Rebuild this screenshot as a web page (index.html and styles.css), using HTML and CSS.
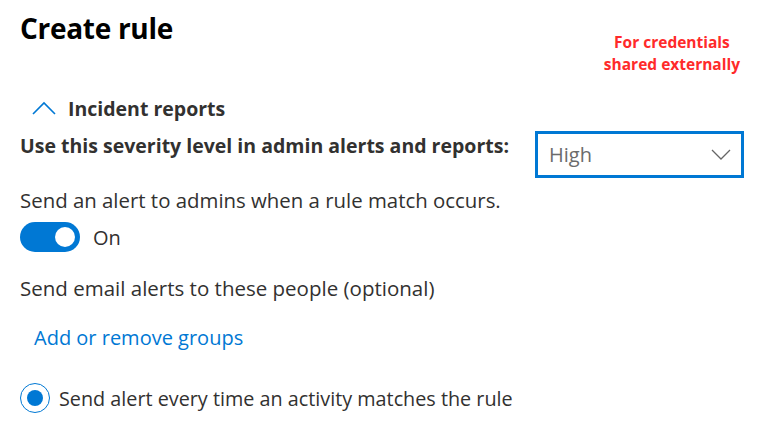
FILE: index.html
```html
<!DOCTYPE html>
<html>
<head>
<meta charset="utf-8">
<link rel="stylesheet" href="styles.css">
</head>
<body>
<div class="page">
  <div class="top">
    <h1 class="title">Create rule</h1>
    <div class="note">For credentials<br>shared externally</div>
  </div>
  <div class="section-head">
    <svg class="chev-up" width="24" height="14" viewBox="0 0 24 14"><path d="M1 13 L12 2 L23 13" fill="none" stroke="#0078d4" stroke-width="1.6"/></svg>
    <span class="section-title">Incident reports</span>
  </div>
  <div class="severity">
    <span class="sev-label">Use this severity level in admin alerts and reports:</span>
    <div class="dropdown">
      <span class="dd-value">High</span>
      <svg class="chev-down" width="20" height="11" viewBox="0 0 20 11"><path d="M1 1 L10 10 L19 1" fill="none" stroke="#666" stroke-width="1.3"/></svg>
    </div>
  </div>
  <div class="text-row alert">Send an alert to admins when a rule match occurs.</div>
  <div class="toggle-row">
    <span class="toggle"><span class="knob"></span></span>
    <span class="toggle-label">On</span>
  </div>
  <div class="text-row email">Send email alerts to these people (optional)</div>
  <a class="link">Add or remove groups</a>
  <div class="radio-row">
    <span class="radio"><span class="dot"></span></span>
    <span class="radio-label">Send alert every time an activity matches the rule</span>
  </div>
</div>
</body>
</html>
```
FILE: styles.css
```css
* { box-sizing: border-box; }
html, body { margin: 0; padding: 0; background: #fff; }
body { font-family: "Open Sans", "Noto Sans", sans-serif; color: #323130; width: 768px; height: 424px; overflow: hidden; }
.page { padding: 10px 0 0 20px; display: flex; flex-direction: column; }
.top { display: flex; justify-content: space-between; align-items: flex-start; height: 66px; }
.title { margin: 0; font-size: 28px; font-weight: 700; color: #000; line-height: 36px; letter-spacing: -0.3px; }
.note { color: #ff2a2a; font-weight: 700; font-size: 15.5px; line-height: 22px; text-align: center; margin: 21px 28px 0 0; }
.section-head { display: flex; align-items: center; margin: 20px 0 0 12px; height: 24px; }
.chev-up { display: block; margin-right: 12px; }
.section-title { font-size: 19.5px; font-weight: 700; color: #323130; }
.severity { display: flex; align-items: flex-start; margin-top: 11px; }
.sev-label { font-size: 19.5px; font-weight: 700; color: #323130; width: 515px; line-height: 26px; margin-top: 2px; white-space: nowrap; }
.dropdown { width: 209px; height: 47px; border: 3px solid #0078d4; display: flex; align-items: center; justify-content: space-between; padding: 0 10px 0 11px; }
.dd-value { font-size: 20px; color: #6b6b6b; }
.chev-down { display: block; }
.text-row { font-size: 20.4px; line-height: 26px; }
.alert { margin-top: 9px; }
.toggle-row { display: flex; align-items: center; margin-top: 9px; }
.toggle { width: 60px; height: 30px; border-radius: 15px; background: #0078d4; position: relative; display: block; }
.knob { position: absolute; width: 20px; height: 20px; border-radius: 50%; background: #fff; top: 5px; right: 5px; }
.toggle-label { font-size: 20px; margin-left: 13px; }
.email { margin-top: 23px; font-size: 20.5px; }
.link { color: #0078d4; font-size: 20px; line-height: 26px; margin: 24px 0 0 14px; }
.radio-row { display: flex; align-items: center; margin-top: 32px; }
.radio { width: 30px; height: 30px; border-radius: 50%; border: 1.5px solid #0078d4; display: flex; align-items: center; justify-content: center; }
.dot { width: 16px; height: 16px; border-radius: 50%; background: #0078d4; }
.radio-label { font-size: 19.8px; margin-left: 9px; }
```
